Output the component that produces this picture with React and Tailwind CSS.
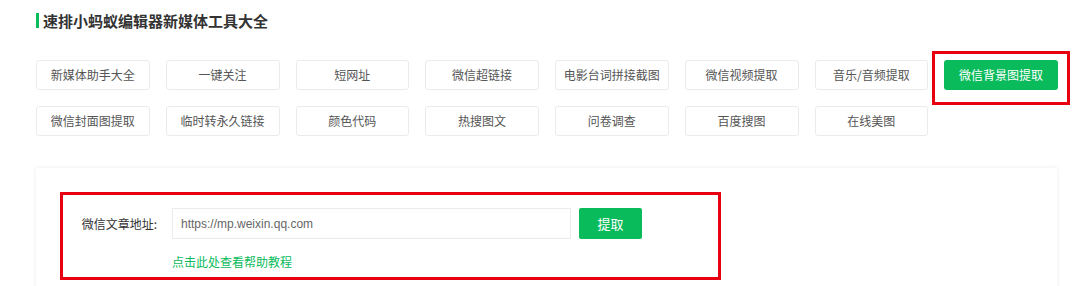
const tools = [
  '新媒体助手大全', '一键关注', '短网址', '微信超链接', '电影台词拼接截图', '微信视频提取', '音乐/音频提取', '微信背景图提取',
  '微信封面图提取', '临时转永久链接', '颜色代码', '热搜图文', '问卷调查', '百度搜图', '在线美图',
]

const active = '微信背景图提取'

export default function App() {
  return (
    <div className="w-[1080px] h-[286px] overflow-hidden bg-white" style={{ fontFamily: '"Noto Sans CJK SC", "Noto Sans", sans-serif' }}>
      <div className="pl-[36px] pr-[22px] pt-[11px]">
        {/* 标题 */}
        <div className="flex items-center h-[18px]">
          <span className="w-[3px] h-[15px] bg-[#09bb5b] mr-[4px]" />
          <h1 className="text-[15px] font-bold text-[#333] leading-none">速排小蚂蚁编辑器新媒体工具大全</h1>
        </div>

        {/* 工具按钮 */}
        <div className="grid grid-cols-8 gap-x-4 gap-y-4 mt-[31px]">
          {tools.map(t => t === active ? (
            <div key={t} className="relative">
              <button className="w-full h-[30px] rounded-[3px] bg-[#09bb5b] text-white text-[12px]">{t}</button>
              <span className="absolute -left-[12px] -right-[12px] -top-[9px] -bottom-[15px] border-[3px] border-[#e60012] pointer-events-none" />
            </div>
          ) : (
            <button key={t} className="h-[30px] rounded-[3px] border border-[#ebebeb] bg-white text-[12px] text-[#555]">{t}</button>
          ))}
        </div>

        {/* 表单面板 */}
        <div className="mt-[32px] mr-[1px] h-[140px] bg-white shadow-[0_0_5px_rgba(0,0,0,0.08)] pt-[24px] pl-[24px]">
          <div className="relative w-[661px] h-[88px] pt-[16px]">
            <span className="absolute inset-0 border-[3px] border-[#e60012] pointer-events-none" />
            <div className="flex items-center">
              <label className="w-[112px] pr-[15px] text-right text-[12px] text-[#333]">微信文章地址:</label>
              <input
                className="w-[399px] h-[31px] border border-[#ebebeb] px-[8px] text-[12px] text-[#666] outline-none"
                defaultValue="https://mp.weixin.qq.com"
                style={{ fontFamily: '"Liberation Sans", Arial, sans-serif' }}
              />
              <button className="ml-[8px] w-[63px] h-[31px] rounded-[2px] bg-[#09bb5b] text-white text-[13px]">提取</button>
            </div>
            <a className="block ml-[112px] mt-[13px] text-[12px] text-[#09bb5b] leading-[20px] cursor-pointer">点击此处查看帮助教程</a>
          </div>
        </div>
      </div>
    </div>
  )
}
